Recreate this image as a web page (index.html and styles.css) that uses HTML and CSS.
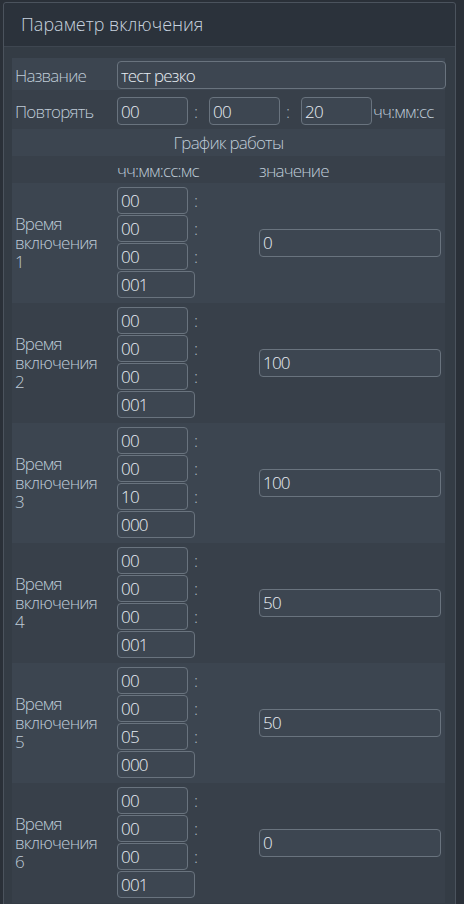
FILE: index.html
```html
<!DOCTYPE html>
<html lang="ru">
<head>
<meta charset="utf-8">
<title>Параметр включения</title>
<link rel="stylesheet" href="styles.css">
</head>
<body>
<div class="panel">
  <div class="panel-head">Параметр включения</div>
  <div class="panel-body">
    <div class="tbl">
      <div class="row light r-name">
        <div class="c-label">Название</div>
        <div class="c-span"><input class="inp inp-full" value="тест резко"></div>
      </div>
      <div class="row dark r-repeat">
        <div class="c-label">Повторять</div>
        <div class="c-span repeat">
          <input class="inp inp-t" value="00"><span class="colon">:</span>
          <input class="inp inp-t" value="00"><span class="colon">:</span>
          <input class="inp inp-t" value="20"><span class="unit">чч:мм:сс</span>
        </div>
      </div>
      <div class="row light r-title">
        <div class="c-all">График работы</div>
      </div>
      <div class="row dark r-head">
        <div class="c-label"></div>
        <div class="c-time-h">чч:мм:сс:мс</div>
        <div class="c-val-h">значение</div>
      </div>

      <div class="row light r-time">
        <div class="c-label">Время<br>включения<br>1</div>
        <div class="c-time">
          <div class="tline"><input class="inp inp-t" value="00"><span class="colon">:</span></div>
          <div class="tline"><input class="inp inp-t" value="00"><span class="colon">:</span></div>
          <div class="tline"><input class="inp inp-t" value="00"><span class="colon">:</span></div>
          <input class="inp inp-ms" value="001">
        </div>
        <div class="c-val"><input class="inp inp-val" value="0"></div>
      </div>

      <div class="row dark r-time">
        <div class="c-label">Время<br>включения<br>2</div>
        <div class="c-time">
          <div class="tline"><input class="inp inp-t" value="00"><span class="colon">:</span></div>
          <div class="tline"><input class="inp inp-t" value="00"><span class="colon">:</span></div>
          <div class="tline"><input class="inp inp-t" value="00"><span class="colon">:</span></div>
          <input class="inp inp-ms" value="001">
        </div>
        <div class="c-val"><input class="inp inp-val" value="100"></div>
      </div>

      <div class="row light r-time">
        <div class="c-label">Время<br>включения<br>3</div>
        <div class="c-time">
          <div class="tline"><input class="inp inp-t" value="00"><span class="colon">:</span></div>
          <div class="tline"><input class="inp inp-t" value="00"><span class="colon">:</span></div>
          <div class="tline"><input class="inp inp-t" value="10"><span class="colon">:</span></div>
          <input class="inp inp-ms" value="000">
        </div>
        <div class="c-val"><input class="inp inp-val" value="100"></div>
      </div>

      <div class="row dark r-time">
        <div class="c-label">Время<br>включения<br>4</div>
        <div class="c-time">
          <div class="tline"><input class="inp inp-t" value="00"><span class="colon">:</span></div>
          <div class="tline"><input class="inp inp-t" value="00"><span class="colon">:</span></div>
          <div class="tline"><input class="inp inp-t" value="00"><span class="colon">:</span></div>
          <input class="inp inp-ms" value="001">
        </div>
        <div class="c-val"><input class="inp inp-val" value="50"></div>
      </div>

      <div class="row light r-time">
        <div class="c-label">Время<br>включения<br>5</div>
        <div class="c-time">
          <div class="tline"><input class="inp inp-t" value="00"><span class="colon">:</span></div>
          <div class="tline"><input class="inp inp-t" value="00"><span class="colon">:</span></div>
          <div class="tline"><input class="inp inp-t" value="05"><span class="colon">:</span></div>
          <input class="inp inp-ms" value="000">
        </div>
        <div class="c-val"><input class="inp inp-val" value="50"></div>
      </div>

      <div class="row dark r-time">
        <div class="c-label">Время<br>включения<br>6</div>
        <div class="c-time">
          <div class="tline"><input class="inp inp-t" value="00"><span class="colon">:</span></div>
          <div class="tline"><input class="inp inp-t" value="00"><span class="colon">:</span></div>
          <div class="tline"><input class="inp inp-t" value="00"><span class="colon">:</span></div>
          <input class="inp inp-ms" value="001">
        </div>
        <div class="c-val"><input class="inp inp-val" value="0"></div>
      </div>
    </div>
  </div>
</div>
</body>
</html>
```

FILE: styles.css
```css
* { box-sizing: border-box; }

html, body {
  margin: 0;
  padding: 0;
  background: #2a3038;
}

body {
  font-family: "Open Sans", "Liberation Sans", Arial, sans-serif;
  font-weight: 300;
  font-size: 17px;
  letter-spacing: -0.8px;
  color: #bfcbd7;
  padding: 2px 0 0 3px;
  height: 904px;
  overflow: hidden;
}

.panel {
  width: 453px;
  border: 1px solid #4b535d;
  border-radius: 3px;
  background: #343c45;
  min-height: 1000px;
}

.panel-head {
  height: 44px;
  background: #2b323b;
  border-bottom: 1px solid #3e4650;
  padding: 11px 0 0 17px;
  line-height: 20px;
  font-size: 18px;
  letter-spacing: 0;
  color: #c8d3df;
  border-radius: 3px 3px 0 0;
}

.panel-body {
  padding: 11px 10px 0 8px;
}

.row {
  display: grid;
  grid-template-columns: 102px 142px 1fr;
  align-items: center;
}

.light { background: #3c4550; }
.dark { background: #38404a; }

.c-label {
  padding-left: 3px;
  line-height: 19px;
}

.c-span {
  grid-column: 2 / 4;
  padding-left: 3px;
}

.c-all {
  grid-column: 1 / 4;
  text-align: center;
}

.r-name { padding: 3px 0 1px; }
.r-name .c-span { margin-right: -1px; }
.r-repeat { padding: 7px 0 4px; }
.r-title { height: 27px; }
.r-head { height: 27px; padding-top: 2px; }
.r-time { height: 120px; padding: 4px 0 5px; }

.c-time-h, .c-val-h {
  padding-left: 3px;
}

.repeat {
  display: flex;
  align-items: center;
}

.inp {
  display: block;
  font-family: inherit;
  font-weight: 300;
  font-size: 17px;
  letter-spacing: -0.8px;
  color: #e8eef4;
  background: #3d4651;
  border: 1px solid #69737e;
  border-radius: 4px;
  padding: 0 0 0 3px;
  margin: 0;
  outline: none;
  height: 28px;
}

.inp-full { width: 100%; }

.inp-t { width: 71px; }

.colon {
  width: 21px;
  padding-left: 6px;
  color: #a9b5c1;
}

.unit {
  padding-left: 1px;
  white-space: nowrap;
}

.c-time {
  padding-left: 3px;
  display: flex;
  flex-direction: column;
  gap: 1px;
}

.tline {
  display: flex;
  align-items: center;
}

.c-time .inp { height: 27px; }

.inp-ms { width: 78px; }

.c-val {
  padding: 0 4px 0 3px;
}

.inp-val { width: 100%; }
```
